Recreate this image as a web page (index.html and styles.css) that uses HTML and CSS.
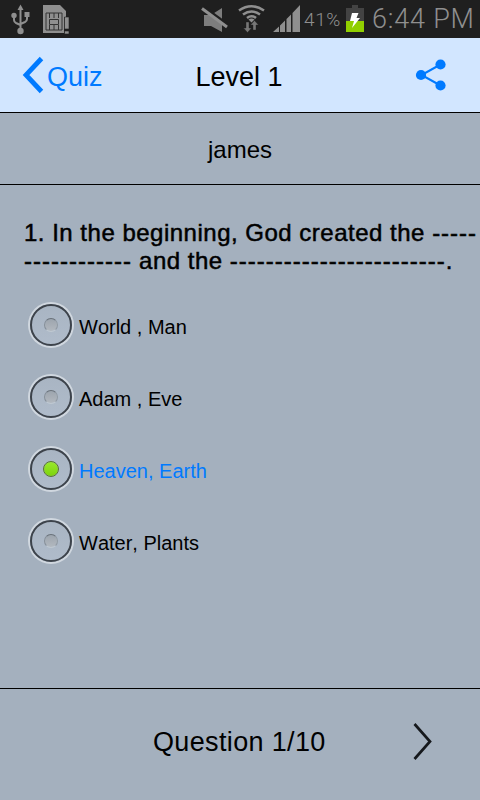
FILE: index.html
```html
<!DOCTYPE html>
<html>
<head>
	<meta charset="utf-8">
	<meta name="viewport" content="width=device-width, initial-scale=1">
	<title>Quiz</title>
	<link rel="stylesheet" href="styles.css">
</head>
<body>

<div class="status">
	<svg class="status-icons" width="300" height="38" viewBox="0 0 300 38">
		<!-- usb -->
		<g fill="#8f8f8f" stroke="#8f8f8f">
			<path d="M20.500 4.500L23.500 10H17.500Z" stroke="none"/>
			<path d="M20.500 9V30M14 16V20Q14 22 16 23L20.500 25M27 15V19Q27 21 25 22L20.500 24" fill="none" stroke-width="2"/>
			<circle cx="14" cy="15.500" r="2.700" stroke="none"/>
			<path d="M24.500 12H29.500V17H24.500Z" stroke="none"/>
			<circle cx="20.500" cy="31" r="3.200" stroke="none"/>
		</g>
		<!-- sim card -->
		<path d="M43 5H60L66 11V17H64V33H43Z" fill="#8f8f8f"/>
		<path d="M46 13H62V30H46ZM49.500 13V18M54 13V18M58.500 13V18M49.500 25V30M54 25V30M58.500 25V30M49.500 19.500H58.500V24.500H49.500Z" fill="none" stroke="#333" stroke-width="1"/>
		<path d="M64.500 17H69V29H64.500ZM64.500 31H69V34H64.500Z" fill="#8f8f8f" stroke="#1f1f1f" stroke-width=".6"/>
		<!-- muted -->
		<path d="M204 15H211L222 8V32L211 26H204Z" fill="#7d7d7d"/>
		<path d="M203 7L228 25.500" stroke="#1f1f1f" stroke-width="4"/>
		<path d="M202 8.500L227 27" stroke="#8f8f8f" stroke-width="3"/>
		<!-- wifi -->
		<g fill="none" stroke="#8f8f8f" stroke-width="2.600">
			<path d="M239 10.500Q251.500 2 264 10.500M243 14.500Q251.500 8.500 260 14.500M247 18Q251.500 14.500 256 18"/>
		</g>
		<path d="M248.500 19.500Q251.500 17.500 254.500 19.500L251.500 22.500Z" fill="#8f8f8f"/>
		<path d="M246 22H249V28H251.500L247.500 32.500L243.500 28H246ZM253 30H256V25H258.500L254.500 20.500L250.500 25H253Z" fill="#777" stroke="#1f1f1f" stroke-width=".4"/>
		<!-- signal -->
		<path d="M273 32L279 26.500V32ZM280 32V25.500L285 20.500V32ZM286.500 32V19L291 14.500V32ZM292.500 32V13L300 5V32Z" fill="#8f8f8f"/>
	</svg>
	<span class="percent">41%</span>
	<svg class="battery" width="18" height="38" viewBox="0 0 18 38">
		<path d="M6 5H12V8H18V21H0V8H6Z" fill="#434343"/>
		<path d="M0 21H18V32H0Z" fill="#91cf00"/>
		<path d="M6 13H12.500L10.500 18H14L6 28L8 21H4Z" fill="#fff"/>
	</svg>
	<span class="clock">6:44 PM</span>
</div>

<div class="header">
	<div class="back">
		<svg width="22" height="38" viewBox="0 0 22 38">
			<path d="M19.500 2.500L4 19L19.500 35.500" fill="none" stroke="#007aff" stroke-width="4.800"/>
		</svg>
		<span>Quiz</span>
	</div>
	<div class="title">Level 1</div>
	<svg class="share" width="32" height="34" viewBox="0 0 32 34">
		<path d="M25.500 6.500L6.500 17L25.500 27.500" fill="none" stroke="#007aff" stroke-width="2"/>
		<g fill="#007aff">
			<circle cx="25.500" cy="6.500" r="5.100"/>
			<circle cx="6" cy="17" r="5.100"/>
			<circle cx="25.500" cy="27.500" r="5.100"/>
		</g>
	</svg>
</div>

<div class="player">james</div>

<div class="content">
	<div class="question">
		<div>1. In the beginning, God created the <span class="blank">-----</span></div>
		<div><span class="blank">------------</span> and the <span class="blank">------------------------</span>.</div>
	</div>
	<div class="options">
		<div class="option"><span class="radio"></span><span>World , Man</span></div>
		<div class="option"><span class="radio"></span><span>Adam , Eve</span></div>
		<div class="option selected"><span class="radio"></span><span>Heaven, Earth</span></div>
		<div class="option"><span class="radio"></span><span>Water, Plants</span></div>
	</div>
</div>

<div class="footer">
	<div class="count">Question 1/10</div>
	<svg class="next" width="20" height="38" viewBox="0 0 20 38">
		<path d="M1.500 2L17 19.500L1.500 37" fill="none" stroke="#15181c" stroke-width="2.700"/>
	</svg>
</div>

</body>
</html>
```
FILE: styles.css
```css
body {
	font-family: "Liberation Sans", Arial, sans-serif;
	margin: 0;
	height: 800px;
	background-color: #a4b0be;
	color: #000;
	display: flex;
	flex-direction: column;
	overflow: hidden;
	font-kerning: none;
}
svg {
	display: block;
	flex: none;
}
.status {
	height: 38px;
	background-color: #1f1f1f;
	color: #8f8f8f;
	display: flex;
	line-height: 38px;
	white-space: nowrap;
}
.percent {
	width: 42px;
	margin-left: 4px;
	font-family: Roboto, sans-serif;
	font-weight: 300;
	font-size: 19px;
	line-height: 40px;
	letter-spacing: 0.6px;
}
.clock {
	margin-left: 8px;
	font-family: Roboto, sans-serif;
	font-weight: 300;
	font-size: 27px;
	letter-spacing: 0.8px;
}

/* Top bar */
.header {
	height: 74px;
	box-sizing: border-box;
	padding: 0 33px 0 22px;
	background-color: #d2e6ff;
	display: grid;
	grid-template-columns: 1fr auto 1fr;
	align-items: center;
	font-size: 27px;
}
.back {
	display: flex;
	align-items: center;
	gap: 3px;
	color: #007aff;
}
.back span, .title {
	padding-top: 4px;
}
.title {
	padding-left: 9px;
}
.share {
	justify-self: end;
}
.player {
	height: 71px;
	border-top: 1px solid #000;
	border-bottom: 1px solid #000;
	font-size: 24px;
	line-height: 73px;
	text-align: center;
}

/* Question and answers */
.content {
	flex: 1;
	padding: 34px 0 0 24px;
}
.question {
	font-size: 24px;
	line-height: 28px;
	letter-spacing: 0.5px;
	white-space: nowrap;
	-webkit-text-stroke: 0.5px #000;
}
.blank {
	letter-spacing: 1px;
}
.options {
	padding: 14px 0 0 4px;
}
.option {
	height: 72px;
	display: flex;
	align-items: center;
	gap: 5px;
	font-size: 20px;
}
.option span:last-child {
	padding-top: 4px;
}
.selected {
	color: #007aff;
}
.radio {
	width: 38px;
	height: 38px;
	margin: 2px;
	border: 2px solid #3d434b;
	border-radius: 50%;
	box-shadow: 0 0 0 2px #d0d7df;
	background-image: linear-gradient(#a9b5c3, #afbbca);
	display: flex;
	align-items: center;
	justify-content: center;
}
.radio::after {
	content: "";
	width: 12px;
	height: 12px;
	border: 1px solid;
	border-color: #687078 #9099a2 #c0c9d2 #858e97;
	border-radius: 50%;
	background: linear-gradient(#9da5ae, #b2b8bf) padding-box;
}
.selected .radio::after {
	width: 14px;
	height: 14px;
	border-color: #59752f;
	background-image: linear-gradient(#99e82c, #7dd30c);
}

.footer {
	height: 111px;
	border-top: 1px solid #000;
	padding: 0 47px 0 153px;
	display: flex;
	align-items: center;
	justify-content: space-between;
	font-size: 27px;
	letter-spacing: 0.35px;
}
.count {
	margin-top: -4px;
}
.next {
	margin-top: -7px;
}
```
